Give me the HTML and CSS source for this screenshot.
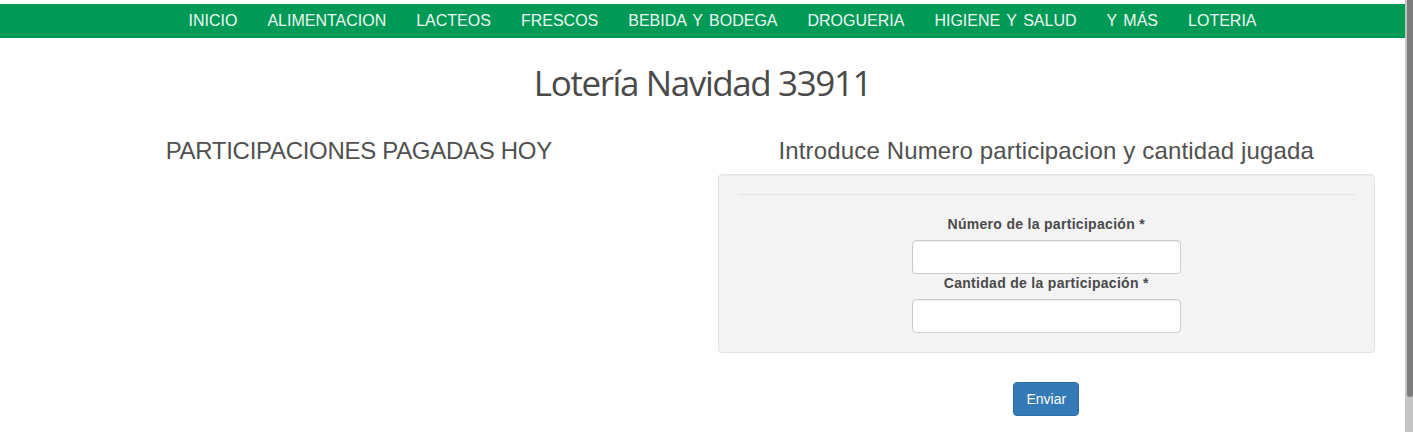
FILE: index.html
```html
<!DOCTYPE html>
<html lang="es">
<head>
  <meta charset="UTF-8" />
  <title>Lotería Navidad 33911</title>
  <link rel="stylesheet" href="styles.css">
</head>
<body>

  <nav class="menu">
    <ul>
      <li><a href="#">INICIO</a></li>
      <li><a href="#">ALIMENTACION</a></li>
      <li><a href="#">LACTEOS</a></li>
      <li><a href="#">FRESCOS</a></li>
      <li><a href="#">BEBIDA Y BODEGA</a></li>
      <li><a href="#">DROGUERIA</a></li>
      <li><a href="#">HIGIENE Y SALUD</a></li>
      <li><a href="#">Y MÁS</a></li>
      <li><a href="#">LOTERIA</a></li>
    </ul>
  </nav>

  <h1 class="titulo">Lotería Navidad 33911</h1>

  <div class="container">
    <div class="row">
      <div class="col">
        <h3 class="pagadas">PARTICIPACIONES PAGADAS HOY</h3>
      </div>
      <div class="col">
        <h3 class="introduce">Introduce Numero participacion y cantidad jugada</h3>
        <div class="well">
          <hr />
          <label for="numero">Número de la participación *</label>
          <input type="text" id="numero" />
          <label for="cantidad">Cantidad de la participación *</label>
          <input type="text" id="cantidad" />
        </div>
        <div class="enviar">
          <button class="btn">Enviar</button>
        </div>
      </div>
    </div>
  </div>

  <div class="scrollbar"><div class="thumb"></div></div>

</body>
</html>
```

FILE: styles.css
```css
html, body {
  overflow: hidden;
}

body {
  font-family: 'Liberation Sans', Arial, sans-serif;
  font-size: 14px;
  line-height: 1.42857;
  color: #555;
  background: #fff;
  margin: 0;
  padding: 4px 8px 0 0;
}

.menu {
  background: #009a57;
  height: 34px;
}

.menu ul {
  list-style: none;
  margin: 0;
  padding: 0 0 0 40px;
  display: flex;
  justify-content: center;
  height: 34px;
  align-items: center;
}

.menu a {
  display: block;
  padding: 0 15px;
  color: #eef8f2;
  font-size: 16px;
  line-height: 34px;
  word-spacing: 2px;
  text-decoration: none;
}

.titulo {
  font-family: 'Open Sans', sans-serif;
  font-weight: normal;
  font-size: 35px;
  letter-spacing: -1.4px;
  color: #4a4a4a;
  text-align: center;
  margin: 26px 0 35px;
  line-height: 1.1;
}

.container {
  padding: 0 15px;
}

.row {
  display: flex;
}

.col {
  flex: 1;
  padding: 0 15px;
  text-align: center;
}

h3 {
  font-size: 24px;
  font-weight: normal;
  line-height: 1.1;
  color: #505050;
  margin: 0 0 10px;
}

.pagadas {
  letter-spacing: -0.3px;
}

.introduce {
  letter-spacing: 0.15px;
}

.well {
  background: #f4f4f4;
  border: 1px solid #e3e3e3;
  border-radius: 4px;
  padding: 19px;
  box-shadow: inset 0 1px 1px rgba(0, 0, 0, 0.05);
}

hr {
  border: 0;
  border-top: 1px solid #e3e3e3;
  margin: 0 0 20px;
}

label {
  display: block;
  font-weight: bold;
  color: #4a4a4a;
  letter-spacing: 0.3px;
  margin-bottom: 5px;
}

input {
  display: block;
  box-sizing: border-box;
  width: 269px;
  height: 34px;
  margin: 0 auto;
  border: 1px solid #ccc;
  border-radius: 4px;
  background: #fff;
  box-shadow: inset 0 1px 1px rgba(0, 0, 0, 0.075);
}

.enviar {
  margin-top: 29px;
}

.btn {
  font-family: 'Liberation Sans', Arial, sans-serif;
  font-size: 14px;
  color: #fff;
  background: #337ab7;
  border: 1px solid #2e6da4;
  border-radius: 4px;
  height: 34px;
  padding: 6px 12px;
  cursor: pointer;
}

.scrollbar {
  position: fixed;
  top: 0;
  right: 0;
  width: 8px;
  height: 100%;
  background: #c4c4c4;
}

.thumb {
  margin-left: 2px;
  height: 397px;
  background: #7c7c7c;
  border-radius: 0 0 3px 3px;
}
```
